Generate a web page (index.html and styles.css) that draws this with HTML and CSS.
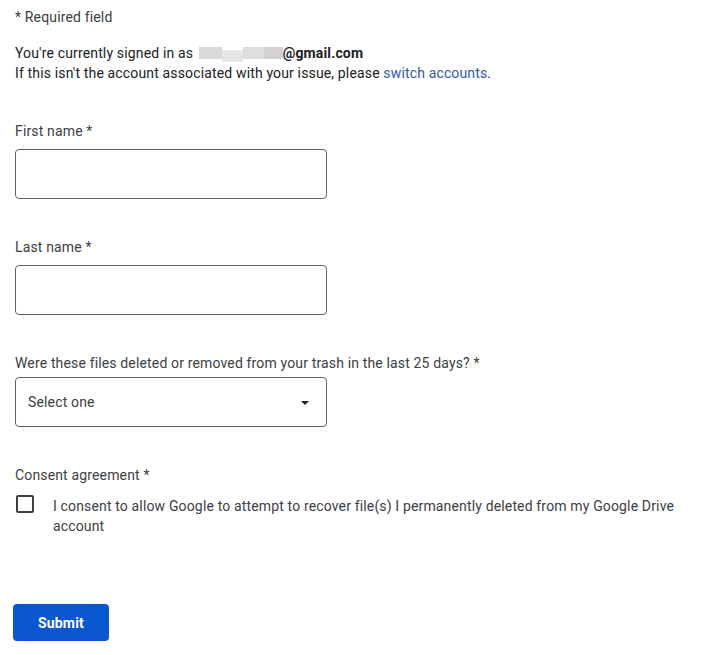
FILE: index.html
```html
<!DOCTYPE html>
<html>
<head>
  <link rel="stylesheet" href="styles.css">
</head>
<body>

<div class="container">
  <p class="required-note">* Required field</p>

  <p class="account-note">
    You're currently signed in as
    <span class="blurred"><span class="b1"></span><span class="b2"></span><span class="b3"></span><span class="b4"></span></span><strong>@gmail.com</strong><br>
    If this isn't the account associated with your issue, please <a href="#">switch accounts</a>.
  </p>

  <form id="recovery-form">
    <div class="form-group">
      <label for="first-name">First name *</label>
      <input type="text" id="first-name">
    </div>

    <div class="form-group">
      <label for="last-name">Last name *</label>
      <input type="text" id="last-name">
    </div>

    <div class="form-group select-group">
      <label for="deleted">Were these files deleted or removed from your trash in the last 25 days? *</label>
      <div class="select-box" id="deleted">
        <span>Select one</span>
        <span class="arrow"></span>
      </div>
    </div>

    <div class="form-group consent-group">
      <label>Consent agreement *</label>
      <div class="consent-row">
        <span class="checkbox"></span>
        <span class="consent-text">I consent to allow Google to attempt to recover file(s) I permanently deleted from my Google Drive account</span>
      </div>
    </div>

    <button type="submit">Submit</button>
  </form>
</div>

</body>
</html>
```

FILE: styles.css
```css
body {
  font-family: Roboto, "Liberation Sans", Arial, sans-serif;
  font-size: 14px;
  line-height: 20px;
  letter-spacing: 0.15px;
  color: #202124;
  background-color: #fff;
  margin: 0;
  padding: 0;
}

.container {
  padding: 7px 15px 0 15px;
  width: 680px;
}

p {
  margin: 0;
}

.required-note {
  color: #3c4043;
}

.account-note {
  margin-top: 16px;
}

.account-note strong {
  font-weight: 700;
}

.account-note a {
  color: #2f5aa8;
  text-decoration: none;
}

.blurred {
  display: inline-flex;
  width: 84px;
  height: 12px;
  vertical-align: -1px;
  margin-left: 2px;
}

.blurred span {
  display: block;
  height: 100%;
}

.b1 { width: 23px; background: #d9d9d9; }
.b2 { width: 21px; background: #e6e6e6; margin-top: 3px; }
.b3 { width: 21px; background: #dedede; }
.b4 { width: 19px; background: #d2d2d2; }

.form-group {
  margin-top: 38px;
}

label {
  display: block;
  color: #3c4043;
}

input[type="text"] {
  display: block;
  box-sizing: border-box;
  width: 312px;
  height: 50px;
  margin-top: 8px;
  padding: 0 12px;
  border: 1px solid #5f6368;
  border-radius: 4px;
  font-family: inherit;
  font-size: 14px;
}

.select-box {
  box-sizing: border-box;
  width: 312px;
  height: 50px;
  margin-top: 4px;
  padding: 0 17px 0 12px;
  border: 1px solid #5f6368;
  border-radius: 4px;
  display: flex;
  align-items: center;
  justify-content: space-between;
  color: #3c4043;
}

.arrow {
  width: 0;
  height: 0;
  border-left: 4px solid transparent;
  border-right: 4px solid transparent;
  border-top: 4px solid #202124;
  margin-top: 1px;
}

.consent-row {
  display: flex;
  align-items: flex-start;
  margin-top: 10px;
}

.checkbox {
  flex: none;
  box-sizing: border-box;
  width: 18px;
  height: 18px;
  border: 2px solid #3c4043;
  border-radius: 2px;
  margin: 0 19px 0 1px;
}

.consent-text {
  margin-top: 1px;
  width: 640px;
  color: #3c4043;
}

button {
  margin: 68px 0 0 -2px;
  width: 96px;
  height: 37px;
  background-color: #0b57d0;
  color: #fff;
  border: none;
  border-radius: 4px;
  font-family: Roboto, "Liberation Sans", Arial, sans-serif;
  font-size: 14px;
  font-weight: 700;
  letter-spacing: 0.2px;
  cursor: pointer;
}
```
